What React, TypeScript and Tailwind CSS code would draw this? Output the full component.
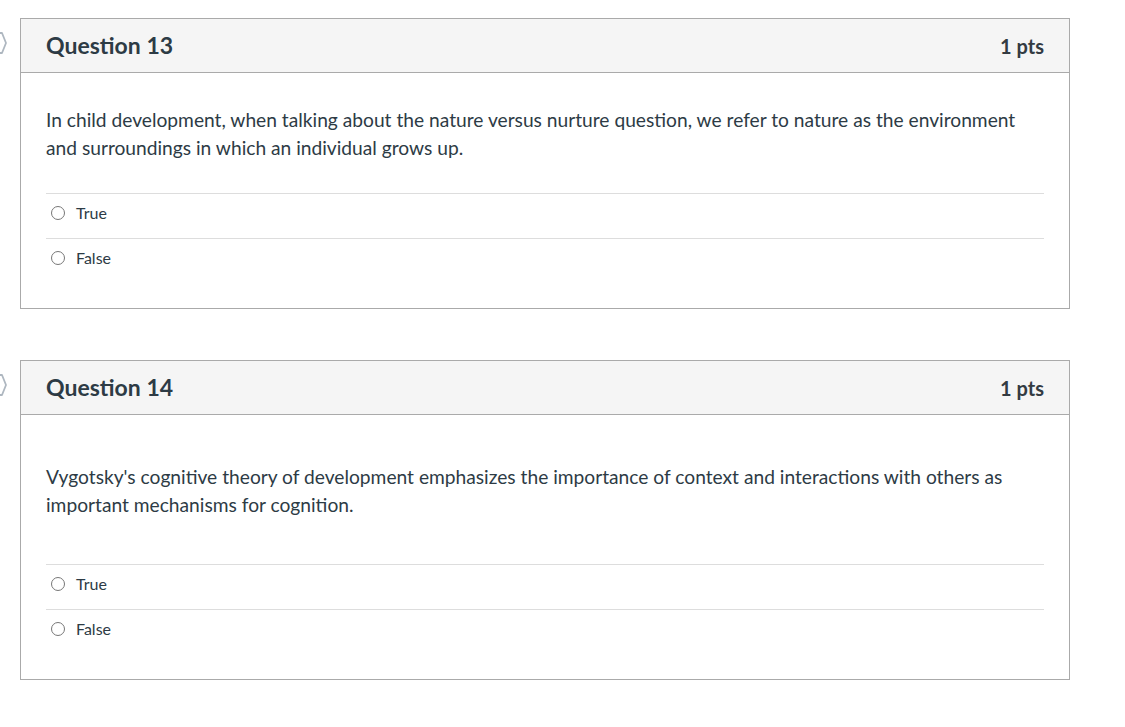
import { ReactNode } from 'react';

function Bookmark() {
  return (
    <svg width="12" height="22" viewBox="0 0 12 22" className="absolute -left-[5px] top-[14px]">
      <path d="M1 1 L7 1 L11 11 L7 21 L1 21" fill="none" stroke="#aeb7c0" strokeWidth="1.8" strokeLinejoin="round" />
    </svg>
  );
}

function Answer({ label }: { label: string }) {
  return (
    <div className="flex items-center h-[45px] border-t border-[#dddddd] pl-[5px] pb-[6px]">
      <span className="w-[14px] h-[14px] rounded-full border border-[#777777] mr-[11px]" />
      <span className="text-[16px] text-[#2d3b45]">{label}</span>
    </div>
  );
}

function Question({ num, top, gap, children }: { num: number; top: string; gap: string; children: ReactNode }) {
  return (
    <div className="relative pl-[20px] w-[1070px]">
      <Bookmark />
      <div className="border border-[#aaaaaa] bg-white">
        <div className="flex items-center justify-between h-[54px] bg-[#f5f5f5] border-b border-[#aaaaaa] px-[25px]">
          <h2 className="text-[23px] font-bold text-[#2d3b45]">Question {num}</h2>
          <span className="text-[20px] font-bold text-[#333b42]">1 pts</span>
        </div>
        <div className={`px-[25px] pb-[25px] ${top}`}>
          <p className={`text-[19.2px] leading-[28px] text-[#2d3b45] ${gap}`}>{children}</p>
          <Answer label="True" />
          <Answer label="False" />
        </div>
      </div>
    </div>
  );
}

export default function App() {
  return (
    <div className="min-h-screen bg-white pt-[18px] flex flex-col gap-[51px]" style={{ fontFamily: 'Lato, "Noto Sans", sans-serif' }}>
      <Question num={13} top="pt-[33px]" gap="mb-[31px]">
        In child development, when talking about the nature versus nurture question, we refer to nature as the environment and surroundings in which an individual grows up.
      </Question>
      <Question num={14} top="pt-[48px]" gap="mb-[45px]">
        Vygotsky's cognitive theory of development emphasizes the importance of context and interactions with others as important mechanisms for cognition.
      </Question>
    </div>
  );
}
